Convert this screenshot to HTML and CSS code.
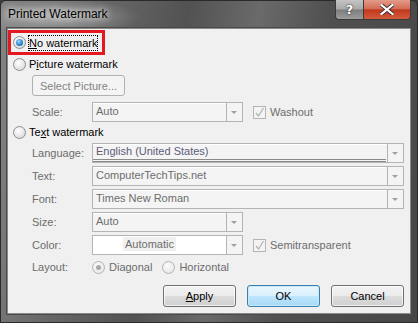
FILE: index.html
```html
<!DOCTYPE html>
<html lang="en">
  <head>
    <meta charset="UTF-8" />
    <title>Printed Watermark</title>
    <link rel="stylesheet" href="styles.css">
  </head>
  <body>
    <div class="window">
      <div class="titlebar">
        <span class="title">Printed Watermark</span>
        <div class="caption-buttons">
          <span class="cap help">?</span>
          <span class="cap close">
            <svg width="14" height="11" viewBox="0 0 14 11">
              <path d="M1.5 1 L12.5 10 M12.5 1 L1.5 10" stroke="#3a2a2a" stroke-width="4" stroke-linecap="square" fill="none"/>
              <path d="M1.5 1 L12.5 10 M12.5 1 L1.5 10" stroke="#fff" stroke-width="2.2" stroke-linecap="square" fill="none"/>
            </svg>
          </span>
        </div>
      </div>

      <div class="client">
        <div class="option highlight">
          <span class="radio checked"></span>
          <span class="focus"><u>N</u>o watermark</span>
        </div>

        <div class="option">
          <span class="radio"></span>
          <span class="opt-text">P<u>i</u>cture watermark</span>
        </div>

        <div class="sub-row">
          <span class="btn disabled">Select Picture...</span>
        </div>

        <div class="field">
          <span class="label">Scale:</span>
          <div class="combo short"><span class="combo-text">Auto</span><span class="arrow"></span></div>
          <span class="check"><svg width="11" height="11" viewBox="0 0 11 11"><path d="M2 6 L4.5 9 L9.5 1" stroke="#b4b4b4" stroke-width="1.3" fill="none"/></svg></span>
          <span class="check-text">Washout</span>
        </div>

        <div class="option">
          <span class="radio"></span>
          <span class="opt-text">Te<u>x</u>t watermark</span>
        </div>

        <div class="field">
          <span class="label">Language:</span>
          <div class="combo"><span class="combo-text lang">English (United States)</span><span class="arrow"></span></div>
        </div>

        <div class="field">
          <span class="label">Text:</span>
          <div class="combo"><span class="combo-text">ComputerTechTips.net</span><span class="arrow"></span></div>
        </div>

        <div class="field">
          <span class="label">Font:</span>
          <div class="combo"><span class="combo-text">Times New Roman</span><span class="arrow"></span></div>
        </div>

        <div class="field">
          <span class="label">Size:</span>
          <div class="combo short"><span class="combo-text">Auto</span><span class="arrow"></span></div>
        </div>

        <div class="field">
          <span class="label">Color:</span>
          <div class="combo short white"><span class="combo-text center"><span class="auto">Automatic</span></span><span class="arrow"></span></div>
          <span class="check"><svg width="11" height="11" viewBox="0 0 11 11"><path d="M2 6 L4.5 9 L9.5 1" stroke="#b4b4b4" stroke-width="1.3" fill="none"/></svg></span>
          <span class="check-text">Semitransparent</span>
        </div>

        <div class="field layout-row">
          <span class="label">Layout:</span>
          <span class="radio small-dis dot"></span>
          <span class="check-text">Diagonal</span>
          <span class="radio small-dis horiz"></span>
          <span class="check-text">Horizontal</span>
        </div>

        <div class="button-row">
          <span class="btn"><u>A</u>pply</span>
          <span class="btn default">OK</span>
          <span class="btn">Cancel</span>
        </div>
      </div>
    </div>
  </body>
</html>
```

FILE: styles.css
```css
* {
  box-sizing: border-box;
  margin: 0;
  padding: 0;
}

body {
  width: 418px;
  height: 323px;
  background: #3b3b3b;
  font-family: "Liberation Sans", Arial, sans-serif;
  font-size: 11px;
  overflow: hidden;
}

.window {
  width: 418px;
  height: 323px;
  border: 1px solid #2a2a2a;
  border-radius: 6px 6px 0 0;
  background:
    radial-gradient(ellipse 80px 18px at 60px 16px, rgba(255, 255, 255, 0.35), rgba(255, 255, 255, 0) 100%),
    linear-gradient(100deg, #858585 0%, #676767 22%, #525252 40%, #6a6a6a 55%, #505050 70%, #474747 100%);
  display: flex;
  flex-direction: column;
}

.titlebar {
  height: 27px;
  display: flex;
  align-items: flex-start;
  padding-left: 7px;
  padding-right: 6px;
}

.title {
  margin-top: 6px;
  font-family: "Liberation Sans", Arial, sans-serif;
  font-size: 12px;
  color: #000;
  text-shadow: 0 0 6px rgba(255, 255, 255, 0.9), 0 0 10px rgba(255, 255, 255, 0.6);
}

.caption-buttons {
  margin-left: auto;
  display: flex;
  margin-top: -1px;
}

.cap {
  height: 20px;
  display: flex;
  align-items: center;
  justify-content: center;
  border: 1px solid #3a3a3a;
  border-top: none;
}

.help {
  width: 28px;
  border-radius: 0 0 0 4px;
  border-right: none;
  background: linear-gradient(#c4c4c4 0%, #a9a9a9 48%, #7d7d7d 52%, #9c9c9c 100%);
  color: #fff;
  font-family: "DejaVu Sans", sans-serif;
  font-weight: bold;
  font-size: 13px;
  text-shadow: 0 0 2px #333, 0 0 1px #333;
}

.close {
  width: 48px;
  border-radius: 0 0 4px 0;
  background: linear-gradient(#e49b8a 0%, #d46e58 45%, #c0391f 52%, #d35a3c 100%);
}

.client {
  flex: 1;
  margin: 0 6px 8px 6px;
  border: 1px solid #8a8a8a;
  outline: 1px solid #4a4a4a;
  background: #f0f0f0;
  display: flex;
  flex-direction: column;
  padding-right: 6px;
}

.option {
  display: flex;
  align-items: center;
  height: 16px;
  margin-top: 1px;
  padding-left: 5px;
  color: #000;
}

.option.highlight {
  height: 25px;
  width: 97px;
  margin-top: 1px;
  border: 3px solid #e3191f;
  padding-left: 2px;
}

.option + .option {
  margin-top: 1px;
}

.radio {
  width: 13px;
  height: 13px;
  border-radius: 50%;
  border: 1px solid #8e8f8f;
  background: radial-gradient(circle at 40% 35%, #ffffff 0%, #e6e6e6 55%, #cfcfcf 100%);
  position: relative;
  flex: none;
}

.radio.checked::after {
  content: "";
  position: absolute;
  left: 2px;
  top: 2px;
  width: 7px;
  height: 7px;
  border-radius: 50%;
  background: radial-gradient(circle at 40% 35%, #9fd7ff 0%, #2a87d0 55%, #0b4f8c 100%);
}

.focus {
  margin-left: 2px;
  padding: 1px 1px;
  outline: 1px dotted #000;
  outline-offset: -1px;
  line-height: 14px;
}

.opt-text {
  margin-left: 3px;
}

.sub-row {
  margin-top: 3px;
  padding-left: 24px;
}

.btn {
  display: inline-flex;
  align-items: center;
  justify-content: center;
  width: 73px;
  height: 22px;
  border: 1px solid #707070;
  border-radius: 3px;
  background: linear-gradient(#f2f2f2 0%, #ebebeb 49%, #dddddd 51%, #cfcfcf 100%);
  box-shadow: inset 0 0 0 1px rgba(255, 255, 255, 0.7);
  color: #000;
}

.btn.disabled {
  width: 93px;
  height: 21px;
  border-color: #adb2b5;
  background: #f4f4f4;
  box-shadow: none;
  color: #838383;
}

.btn.default {
  border-color: #3c7fb1;
  background: linear-gradient(#eaf6fd 0%, #d9f0fc 49%, #bee6fd 51%, #a7d9f5 100%);
  box-shadow: inset 0 0 0 1px #c6e8f8;
}

.field {
  display: flex;
  align-items: center;
  height: 20px;
  margin-top: 3px;
  padding-left: 24px;
  color: #6d6d6d;
}

.sub-row + .field {
  margin-top: 6px;
}

.field + .option {
  margin-top: 2px;
}

.option + .field {
  margin-top: 3px;
}

.label {
  width: 60px;
  flex: none;
}

.combo {
  flex: 1;
  height: 20px;
  display: flex;
  border: 1px solid #b4b4b4;
  background: #f4f4f4;
  box-shadow: inset 0 1px 0 #fff;
}

.combo.short {
  flex: none;
  width: 151px;
}

.combo.white {
  background: #fff;
}

.combo-text {
  flex: 1;
  padding-left: 3px;
  line-height: 17px;
  color: #6d6d6d;
  white-space: nowrap;
  overflow: hidden;
}

.combo-text.lang {
  color: #5c5c7a;
  border-bottom: 3px double #8a8a8a;
  margin-right: 1px;
  line-height: 15px;
}

.combo-text.center {
  text-align: center;
  padding-left: 0;
  padding-right: 20px;
}

.auto {
  background: #f0f0f0;
  padding: 1px 2px;
}

.arrow {
  width: 16px;
  flex: none;
  border-left: 1px solid #b4b4b4;
  background: #f4f4f4;
  position: relative;
}

.arrow::after {
  content: "";
  position: absolute;
  left: 4px;
  top: 8px;
  border-left: 3px solid transparent;
  border-right: 3px solid transparent;
  border-top: 3px solid #a0a0a0;
}

.check {
  width: 13px;
  height: 13px;
  margin-left: 10px;
  border: 1px solid #b4b4b4;
  background: #f4f4f4;
  display: flex;
  align-items: center;
  justify-content: center;
  flex: none;
}

.check-text {
  margin-left: 4px;
  color: #6d6d6d;
}

.layout-row {
  height: 16px;
  margin-top: 4px;
}

.radio.small-dis {
  border-color: #b4b4b4;
  background: radial-gradient(circle at 40% 35%, #fbfbfb 0%, #ececec 60%, #dedede 100%);
}

.radio.dot::after {
  content: "";
  position: absolute;
  left: 3px;
  top: 3px;
  width: 5px;
  height: 5px;
  border-radius: 50%;
  background: #a8a8a8;
}

.radio.horiz {
  margin-left: 10px;
}

.button-row {
  margin-top: auto;
  margin-bottom: 6px;
  display: flex;
  justify-content: flex-end;
  gap: 11px;
}
```
